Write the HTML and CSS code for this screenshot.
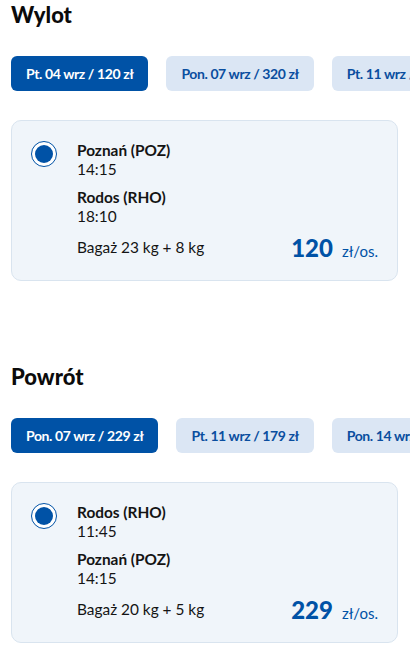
FILE: index.html
```html
<!DOCTYPE html>
<html lang="pl">
<head>
<meta charset="utf-8">
<link rel="stylesheet" href="styles.css">
</head>
<body>
<section class="leg">
  <h2 class="leg-title">Wylot</h2>
  <div class="tabs">
    <button class="tab active">Pt. 04 wrz / 120 zł</button>
    <button class="tab">Pon. 07 wrz / 320 zł</button>
    <button class="tab">Pt. 11 wrz / 179 zł</button>
  </div>
  <div class="card">
    <span class="radio"><span class="dot"></span></span>
    <div class="info">
      <div class="stop"><div class="city">Poznań (POZ)</div><div class="time">14:15</div></div>
      <div class="stop"><div class="city">Rodos (RHO)</div><div class="time">18:10</div></div>
      <div class="bottom">
        <div class="bag">Bagaż 23 kg + 8 kg</div>
        <div class="price"><span class="amount">120</span><span class="unit">zł/os.</span></div>
      </div>
    </div>
  </div>
</section>
<section class="leg second">
  <h2 class="leg-title">Powrót</h2>
  <div class="tabs">
    <button class="tab active">Pon. 07 wrz / 229 zł</button>
    <button class="tab">Pt. 11 wrz / 179 zł</button>
    <button class="tab">Pon. 14 wrz / 199 zł</button>
  </div>
  <div class="card">
    <span class="radio"><span class="dot"></span></span>
    <div class="info">
      <div class="stop"><div class="city">Rodos (RHO)</div><div class="time">11:45</div></div>
      <div class="stop"><div class="city">Poznań (POZ)</div><div class="time">14:15</div></div>
      <div class="bottom">
        <div class="bag">Bagaż 20 kg + 5 kg</div>
        <div class="price"><span class="amount">229</span><span class="unit">zł/os.</span></div>
      </div>
    </div>
  </div>
</section>
</body>
</html>
```
FILE: styles.css
```css
html, body {
  margin: 0;
  padding: 0;
  background: #ffffff;
  overflow: hidden;
}
body {
  font-family: Lato, "Noto Sans", sans-serif;
  color: #141414;
  padding: 2px 12px 0 11px;
  width: 410px;
  box-sizing: border-box;
}
.leg-title {
  margin: 0;
  font-size: 22px;
  line-height: 26px;
  font-weight: 900;
  color: #0b0b0b;
}
.second {
  margin-top: 83px;
}
.tabs {
  display: flex;
  gap: 18px;
  margin-top: 28px;
  width: 420px;
  overflow: hidden;
}
.tab {
  flex: none;
  height: 35px;
  padding: 0 15px;
  border: none;
  border-radius: 6px;
  background: #dbe6f4;
  color: #0a4e9f;
  font-family: Lato, "Noto Sans", sans-serif;
  font-size: 14px;
  font-weight: 700;
  letter-spacing: -0.4px;
}
.tab.active {
  background: #0052a6;
  color: #ffffff;
}
.card {
  margin-top: 29px;
  height: 161px;
  box-sizing: border-box;
  border: 1px solid #d9e4ef;
  border-radius: 10px;
  background: #f0f5fa;
  display: flex;
  gap: 20px;
  padding: 20px 19px 0 19px;
}
.radio {
  flex: none;
  width: 26px;
  height: 26px;
  box-sizing: border-box;
  border: 1.5px solid #0052a6;
  border-radius: 50%;
  background: #ffffff;
  display: flex;
  align-items: center;
  justify-content: center;
}
.dot {
  width: 18px;
  height: 18px;
  border-radius: 50%;
  background: #0052a6;
}
.info {
  flex: 1;
  display: flex;
  flex-direction: column;
  font-size: 15.4px;
  line-height: 19px;
}
.city {
  font-weight: 700;
}
.stop + .stop {
  margin-top: 9px;
}
.bottom {
  margin-top: 12px;
  display: flex;
  justify-content: space-between;
  align-items: flex-start;
}
.price {
  color: #0052a6;
  display: flex;
  align-items: baseline;
  gap: 9px;
  margin-top: -2px;
}
.amount {
  font-size: 24px;
  font-weight: 900;
  line-height: 24px;
}
.unit {
  font-size: 15px;
}
```
